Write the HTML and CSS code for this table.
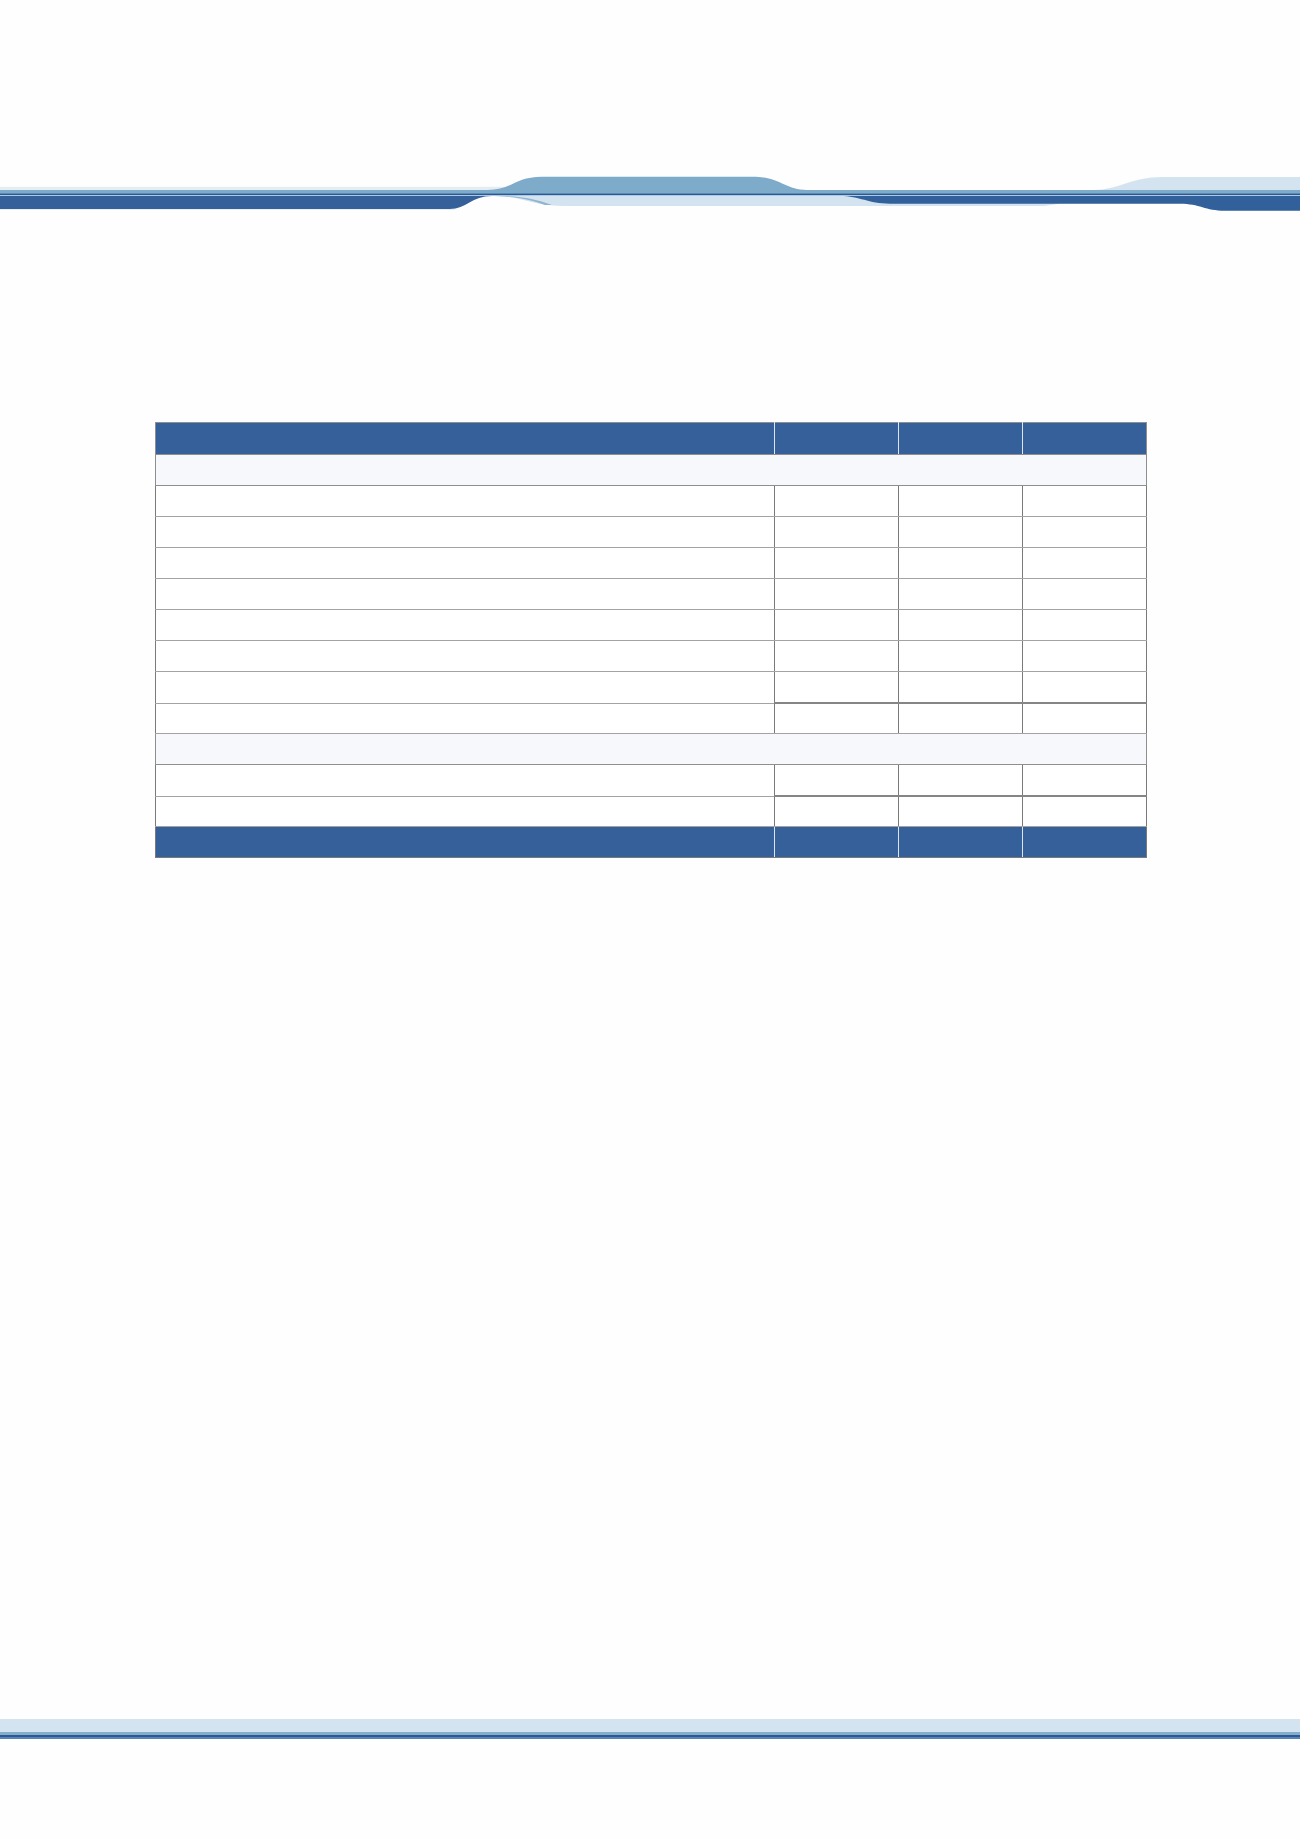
FILE: index.html
```html
<!DOCTYPE html>
<html lang="en">
<head>
<meta charset="utf-8">
<title>Report</title>
<link rel="stylesheet" href="styles.css">
</head>
<body>
<div class="page">
  <header class="top-band">
    <svg class="wave" viewBox="0 0 1300 40" preserveAspectRatio="none" aria-hidden="true">
      <rect x="0" y="11.8" width="540" height="3.4" fill="#e4ecf4"/>
      <path d="M0,15 L487,15 C512,15 515,1.8 542,1.8 L753,1.8 C780,1.8 785,15 807,15 L1300,15 L1300,19 L0,19 Z" fill="#7fabcb"/>
      <path d="M1093,15 C1118,15 1132,2 1162,2 L1300,2 L1300,15 Z" fill="#d3e4f0"/>
      <path d="M492,21 C525,21 530,31 568,31 L1040,31 C1062,31 1072,21 1098,21 Z" fill="#d3e4f0"/>
      <path d="M488,21 C515,21 528,24 545,30 L552,30 C536,24 522,21 500,21 Z" fill="#8fb4d0"/>
      <path d="M840,21 C860,21 868,28.7 890,28.7 L1180,28.7 C1200,28.7 1205,35.7 1225,35.7 L1300,35.7 L1300,21 Z" fill="#31609b"/>
      <path d="M0,21 L492,21 C472,21 466,34 450,34 L0,34 Z" fill="#35609a"/>
      <rect x="0" y="34" width="455" height="1" fill="#e8eef5"/>
      <rect x="0" y="18.6" width="1300" height="1.6" fill="#2a5a96"/>
      <rect x="0" y="20.2" width="1300" height="0.8" fill="#a9c3dc"/>
    </svg>
  </header>

  <main class="content">
    <table class="report">
      <colgroup>
        <col class="c-label">
        <col class="c-num">
        <col class="c-num">
        <col class="c-num">
      </colgroup>
      <thead>
        <tr class="head-row"><th>&nbsp;</th><th>&nbsp;</th><th>&nbsp;</th><th>&nbsp;</th></tr>
      </thead>
      <tbody>
        <tr class="section-row"><td colspan="4">&nbsp;</td></tr>
        <tr><td>&nbsp;</td><td>&nbsp;</td><td>&nbsp;</td><td>&nbsp;</td></tr>
        <tr><td>&nbsp;</td><td>&nbsp;</td><td>&nbsp;</td><td>&nbsp;</td></tr>
        <tr><td>&nbsp;</td><td>&nbsp;</td><td>&nbsp;</td><td>&nbsp;</td></tr>
        <tr><td>&nbsp;</td><td>&nbsp;</td><td>&nbsp;</td><td>&nbsp;</td></tr>
        <tr><td>&nbsp;</td><td>&nbsp;</td><td>&nbsp;</td><td>&nbsp;</td></tr>
        <tr><td>&nbsp;</td><td>&nbsp;</td><td>&nbsp;</td><td>&nbsp;</td></tr>
        <tr><td>&nbsp;</td><td>&nbsp;</td><td>&nbsp;</td><td>&nbsp;</td></tr>
        <tr class="subtotal-row"><td>&nbsp;</td><td>&nbsp;</td><td>&nbsp;</td><td>&nbsp;</td></tr>
        <tr class="section-row"><td colspan="4">&nbsp;</td></tr>
        <tr><td>&nbsp;</td><td>&nbsp;</td><td>&nbsp;</td><td>&nbsp;</td></tr>
        <tr class="subtotal-row"><td>&nbsp;</td><td>&nbsp;</td><td>&nbsp;</td><td>&nbsp;</td></tr>
      </tbody>
      <tfoot>
        <tr class="total-row"><td>&nbsp;</td><td>&nbsp;</td><td>&nbsp;</td><td>&nbsp;</td></tr>
      </tfoot>
    </table>
  </main>

  <footer class="bottom-band">
    <div class="bb-light"></div>
    <div class="bb-mid"></div>
    <div class="bb-line"></div>
    <div class="bb-low"></div>
  </footer>
</div>
</body>
</html>
```

FILE: styles.css
```css
html, body {
  margin: 0;
  padding: 0;
  background: #fefefe;
  font-family: "Liberation Sans", Arial, sans-serif;
  font-size: 13px;
  color: #333;
}

.page {
  width: 1300px;
  height: 1839px;
  display: flex;
  flex-direction: column;
  overflow: hidden;
}

.top-band {
  margin-top: 175px;
  height: 40px;
}

.wave {
  display: block;
  width: 1300px;
  height: 40px;
}

.content {
  padding: 207px 0 0 155px;
}

.report {
  width: 992px;
  border-collapse: collapse;
  table-layout: fixed;
  border: 1px solid #8f8f8f;
}

.c-label { width: 619px; }
.c-num { width: 124px; }

.report th,
.report td {
  height: 30px;
  padding: 0;
  font-size: 12px;
  line-height: 14px;
}

.report td {
  border-top: 1px solid #a3a3a3;
  border-bottom: 1px solid #a3a3a3;
  border-left: 1px solid #7a7a7a;
  border-right: 1px solid #7a7a7a;
  background: #ffffff;
}

.head-row th {
  height: 31px;
  background: #35609a;
  border-top: 1px solid #8f8f8f;
  border-bottom: 1px solid #8f8f8f;
  border-left: 1px solid #dde4ee;
  border-right: 1px solid #dde4ee;
}

.head-row th:first-child { border-left: 1px solid #8f8f8f; }
.head-row th:last-child { border-right: 1px solid #8f8f8f; }

.section-row td {
  background: #f7f8fc;
  border-left: 1px solid #8f8f8f;
  border-right: 1px solid #8f8f8f;
  border-bottom: 1px solid #8f8f8f;
}

.subtotal-row td {
  height: 29px;
}

.subtotal-row td + td {
  border-top: 2px solid #858585;
}

.total-row td {
  height: 30px;
  background: #35609a;
  border-top: 1px solid #7a7a7a;
  border-bottom: 1px solid #7a7a7a;
  border-left: 1px solid #dde4ee;
  border-right: 1px solid #dde4ee;
}

.total-row td:first-child { border-left: 1px solid #7a7a7a; }
.total-row td:last-child { border-right: 1px solid #7a7a7a; }

.bottom-band {
  margin-top: auto;
  margin-bottom: 100px;
  display: flex;
  flex-direction: column;
}

.bb-light { height: 13px; background: #d3e4f0; }
.bb-mid { height: 3px; background: #86aecb; }
.bb-line { height: 2px; background: #2a5a96; }
.bb-low { height: 2px; background: #5a82b4; }
```
